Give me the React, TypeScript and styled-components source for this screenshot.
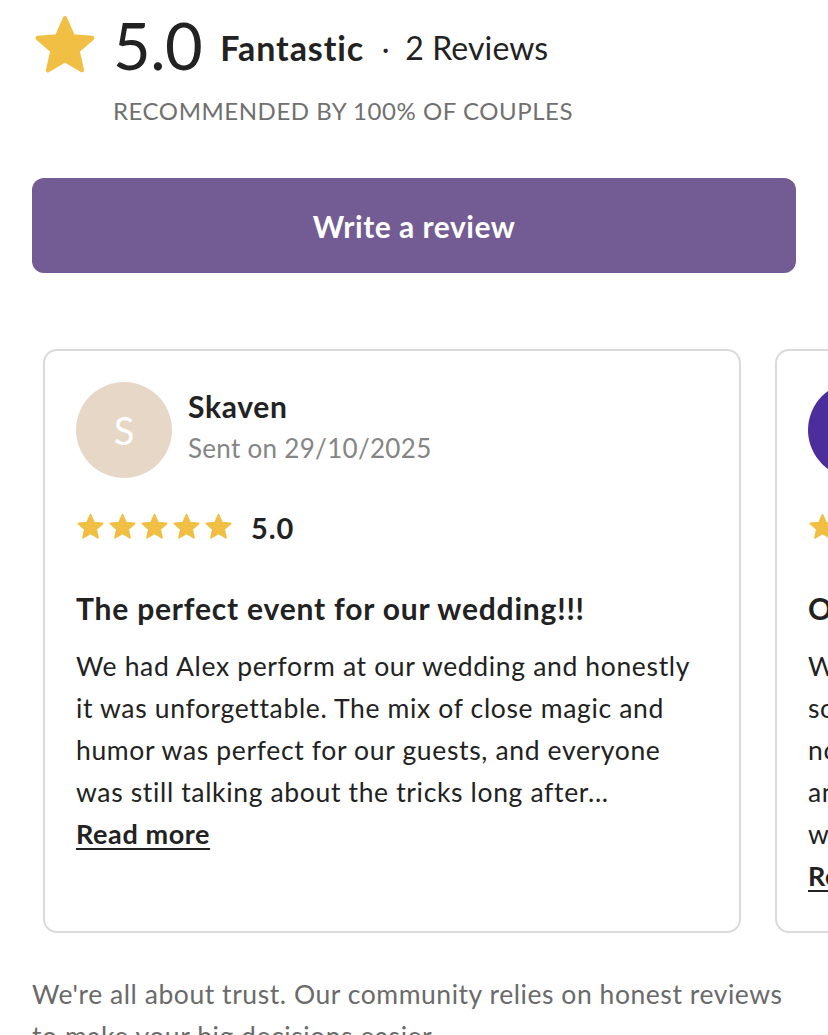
import React from "react";
import styled, { createGlobalStyle } from "styled-components";

const Global = createGlobalStyle`
  html, body { margin: 0; padding: 0; background: #fff; }
  body { font-family: "Lato", "Open Sans", Arial, sans-serif; color: #222; overflow: hidden; }
  * { box-sizing: border-box; }
`;

const Page = styled.div`
  width: 828px;
  height: 1035px;
  overflow: hidden;
  padding: 12px 0 0 0;
`;

const Summary = styled.section`
  padding: 0 32px;
`;

const ScoreRow = styled.div`
  display: flex;
  align-items: center;
  height: 66px;
`;

const BigStar = styled.div`
  width: 66px;
  height: 62px;
  margin-right: 15px;
  display: flex;
`;

const BigScore = styled.span`
  font-size: 65px;
  font-weight: 400;
  color: #222;
  letter-spacing: -0.5px;
  margin-right: 18px;
  line-height: 1;
`;

const Label = styled.span<{ $bold?: boolean }>`
  font-size: ${(p) => (p.$bold ? 34 : 32)}px;
  font-weight: ${(p) => (p.$bold ? 700 : 400)};
  letter-spacing: ${(p) => (p.$bold ? 0.9 : 0.1)}px;
  color: #222;
  line-height: 1;
  margin-top: 6px;
`;

const Dot = styled.span`
  font-size: 28px;
  margin: 6px 16px 0 18px;
  color: #222;
`;

const Recommended = styled.div`
  margin: 18px 0 0 81px;
  font-size: 24px;
  color: #707070;
  letter-spacing: 0.55px;
  text-transform: uppercase;
`;

const WriteButton = styled.button`
  display: flex;
  align-items: center;
  justify-content: center;
  width: 764px;
  height: 95px;
  margin-top: 53px;
  border: none;
  border-radius: 12px;
  background: #735c93;
  color: #fff;
  font-family: inherit;
  font-size: 30px;
  font-weight: 700;
  letter-spacing: 0.5px;
`;

const Carousel = styled.div`
  display: flex;
  gap: 34px;
  padding: 0 0 0 43px;
  margin-top: 76px;
  overflow: hidden;
`;

const Card = styled.article`
  flex: 0 0 698px;
  height: 584px;
  border: 2px solid #dadada;
  border-radius: 14px;
  padding: 31px 31px 0 31px;
  display: flex;
  flex-direction: column;
`;

const Author = styled.div`
  display: flex;
  align-items: flex-start;
  gap: 16px;
`;

const Avatar = styled.div<{ $bg: string }>`
  width: 96px;
  height: 96px;
  border-radius: 50%;
  background: ${(p) => p.$bg};
  color: #fff;
  display: flex;
  align-items: center;
  justify-content: center;
  font-size: 38px;
  flex-shrink: 0;
`;

const AuthorInfo = styled.div`
  display: flex;
  flex-direction: column;
  padding-top: 7px;
`;

const Name = styled.div`
  font-size: 30px;
  font-weight: 700;
  letter-spacing: 0.7px;
  color: #222;
  line-height: 34px;
`;

const Sent = styled.div`
  font-size: 26px;
  color: #858585;
  line-height: 34px;
  margin-top: 8px;
  letter-spacing: 0.3px;
`;

const RatingRow = styled.div`
  display: flex;
  align-items: center;
  margin-top: 32px;
  height: 34px;
`;

const Stars = styled.div`
  display: flex;
  gap: 3px;
  margin-right: 18px;
`;

const RatingValue = styled.span`
  font-size: 29px;
  font-weight: 700;
  letter-spacing: 0.9px;
  color: #222;
`;

const Title = styled.h3`
  margin: 46px 0 0 0;
  font-size: 30px;
  font-weight: 700;
  letter-spacing: 0.8px;
  color: #222;
  line-height: 36px;
`;

const Body = styled.p`
  margin: 19px 0 0 0;
  font-size: 26.5px;
  letter-spacing: 0.65px;
  line-height: 42px;
  color: #222;
  white-space: nowrap;
`;

const ReadMore = styled.a`
  display: inline-block;
  font-size: 27px;
  font-weight: 700;
  letter-spacing: 0.6px;
  color: #222;
  text-decoration: underline;
  text-decoration-thickness: 2px;
  text-underline-offset: 4px;
  line-height: 42px;
`;

const Footer = styled.p`
  margin: 40px 0 0 0;
  padding: 0 32px;
  font-size: 26.5px;
  letter-spacing: 0.55px;
  line-height: 42px;
  color: #6a6a6a;
`;

const StarIcon = ({ size }: { size: number }) => (
  <svg width={size} height={size * 0.95} viewBox="0 0 24 23">
    <path
      d="M12 1.6 L14.9 8.2 L22 8.8 L16.6 13.5 L18.2 20.6 L12 16.9 L5.8 20.6 L7.4 13.5 L2 8.8 L9.1 8.2 Z"
      fill="#f0bf43"
      stroke="#f0bf43"
      strokeWidth={1.6}
      strokeLinejoin="round"
    />
  </svg>
);

type Review = {
  initial: string;
  color: string;
  name: string;
  date: string;
  title: string;
  lines: string[];
};

const reviews: Review[] = [
  {
    initial: "S",
    color: "#e6d7c7",
    name: "Skaven",
    date: "Sent on 29/10/2025",
    title: "The perfect event for our wedding!!!",
    lines: [
      "We had Alex perform at our wedding and honestly",
      "it was unforgettable. The mix of close magic and",
      "humor was perfect for our guests, and everyone",
      "was still talking about the tricks long after...",
    ],
  },
  {
    initial: "M",
    color: "#4b2e9c",
    name: "Marta",
    date: "Sent on 12/09/2025",
    title: "Our guests loved every minute",
    lines: [
      "We hired him for the cocktail hour and it was",
      "so much fun. He went table to table and did",
      "not stop amazing people the whole evening,",
      "and even the kids were hooked. Highly",
      "would recommend to anyone...",
    ],
  },
];

const ReviewCard = ({ r }: { r: Review }) => (
  <Card>
    <Author>
      <Avatar $bg={r.color}>{r.initial}</Avatar>
      <AuthorInfo>
        <Name>{r.name}</Name>
        <Sent>{r.date}</Sent>
      </AuthorInfo>
    </Author>
    <RatingRow>
      <Stars>
        {[0, 1, 2, 3, 4].map((i) => (
          <StarIcon key={i} size={29} />
        ))}
      </Stars>
      <RatingValue>5.0</RatingValue>
    </RatingRow>
    <Title>{r.title}</Title>
    <Body>
      {r.lines.map((l, i) => (
        <React.Fragment key={i}>
          {l}
          <br />
        </React.Fragment>
      ))}
      <ReadMore href="#">Read more</ReadMore>
    </Body>
  </Card>
);

export default function App() {
  return (
    <Page>
      <Global />
      <Summary>
        <ScoreRow>
          <BigStar>
            <StarIcon size={66} />
          </BigStar>
          <BigScore>5.0</BigScore>
          <Label $bold>Fantastic</Label>
          <Dot>·</Dot>
          <Label>2 Reviews</Label>
        </ScoreRow>
        <Recommended>Recommended by 100% of couples</Recommended>
        <WriteButton>Write a review</WriteButton>
      </Summary>
      <Carousel>
        {reviews.map((r, i) => (
          <ReviewCard key={i} r={r} />
        ))}
      </Carousel>
      <Footer>
        We're all about trust. Our community relies on honest reviews to make your big decisions easier.
      </Footer>
    </Page>
  );
}
